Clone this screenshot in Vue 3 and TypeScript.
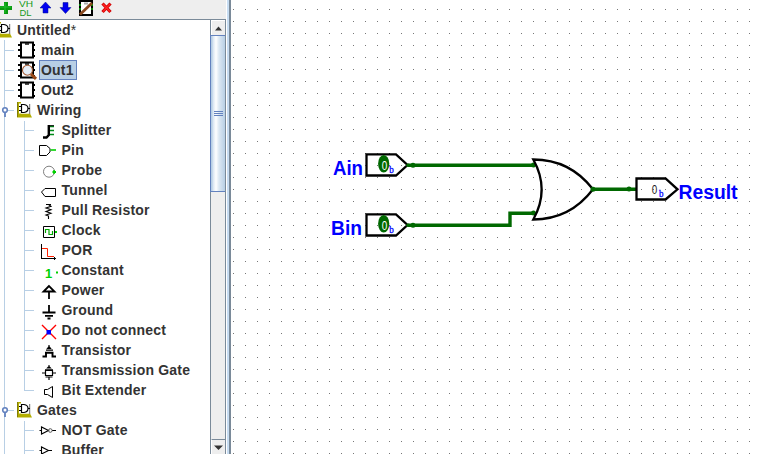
<script setup lang="ts">
interface Shape {
  d: string
  stroke?: string
  fill?: string
  w?: number
}
interface Tool {
  name: string
  icon: string
}
interface Library {
  name: string
  tools: Tool[]
}

const green = '#00d000'

const circuitIcon: Shape[] = [
  { d: 'M21 2.5H33V17.5H21Z', w: 2, fill: '#fff' },
  { d: 'M25 4H29', w: 1.4 },
  { d: 'M18 5H21M18 10H21M18 16H21M33 5H35M33 10H35M33 16H35', w: 2 },
]
const libraryIcon: Shape[] = [
  { d: 'M17 2H21V13.5H30L32 17.5H17Z', fill: '#b3ad00', stroke: 'none' },
  { d: 'M17.5 2V17', stroke: '#817c08' },
  { d: 'M29.5 4V14', stroke: '#888', w: 1.5 },
  { d: 'M19 3.5H29V13.5H19Z', fill: '#fff', stroke: 'none' },
  { d: 'M21.5 4.5H24Q28 5 28 8.5Q28 12 24 12.5H21.5ZM19 6.5H21M19 10.5H21M28 8.5H30', w: 1.2 },
]
const lens: Shape[] = [
  { d: 'M22.5 10.2A5 5 0 1 0 32.5 10.2A5 5 0 1 0 22.5 10.2Z', stroke: '#a35a32', fill: '#e6eef8', w: 1.1 },
  { d: 'M31 14L36 18.8', stroke: '#9a4a1a', w: 3 },
]

const icons: Record<string, Shape[]> = {
  splitter: [
    { d: 'M49 6.5H54M49 10.5H54M49 14.5H54', stroke: '#008a18', w: 1.6 },
    { d: 'M48.8 5V15L46.5 17.5H43', w: 2.4 },
    { d: 'M49 5.7H54', w: 1 },
  ],
  pin: [
    { d: 'M39.5 5.5H46.5L50 8.5V12L46.5 15.5H39.5Z' },
    { d: 'M50.5 10H56', stroke: green, w: 1.6 },
  ],
  probe: [
    { d: 'M43.5 11.7A5.5 5.5 0 1 0 54.5 11.7A5.5 5.5 0 1 0 43.5 11.7Z', stroke: '#808080' },
    { d: 'M52.5 12H56M54 10.2V13.8', stroke: green, w: 2 },
  ],
  tunnel: [{ d: 'M41.5 12L45 8.5H55.5V16.5H45Z' }],
  resistor: [{ d: 'M46 4.5H51M48.5 4.5L51 6.3L46 8L51 9.8L46 11.5L51 13.3L46 15L48.5 16V19', w: 1.1 }],
  clock: [
    { d: 'M43.5 6.5H54.5V17.5H43.5Z' },
    { d: 'M45.5 13V9.5H49V14.5H52.5V11', stroke: '#00a800', w: 1.2 },
    { d: 'M55 12H57', stroke: green, w: 2 },
  ],
  por: [
    { d: 'M41.5 4V19M41 18.5H56M54.5 17V20' },
    { d: 'M42 8.5H47.5V16.5H54', stroke: '#ff2000' },
  ],
  constant: [{ d: 'M56 12.5H58', stroke: green, w: 2 }],
  power: [{ d: 'M49 6L43.5 11.5H54.5ZM49 11.5V19', w: 1.8 }],
  ground: [{ d: 'M49 5V12.5M42.5 12.5H55.5M45 15.8H53M47.5 18.5H50.5', w: 1.8 }],
  cross: [
    { d: 'M42 5L56 19M56 5L42 19', stroke: '#f00', w: 1.4 },
    { d: 'M46.5 10H51V14.5H46.5Z', stroke: 'none', fill: '#00f' },
  ],
  transistor: [
    { d: 'M49 5V7M47.5 8.5L49 6.5L50.5 8.5ZM46 10.2H53', w: 1.2 },
    { d: 'M45 12.7H53.5M46 12.5V16.5H42.5M52.5 12.5V16.5H56', w: 1.9 },
  ],
  transmission: [
    { d: 'M49 5V7M47.5 8L49 6.5L50.5 8Z', w: 1.1 },
    { d: 'M45 9.8H53M45.5 10.5H52.5V15.5H45.5ZM42 13H45M53 13H56M45.5 17H52.5M49 17V20', w: 1.2 },
  ],
  extender: [{ d: 'M44.5 9.5H47.5L52.5 6.5V17.5L47.5 14.5H44.5Z' }],
  not: [
    { d: 'M39.5 10.5H41.5V7L48.5 10.5L41.5 14V10.5M52 10.5H56', w: 1.1 },
    { d: 'M48.5 10.5A1.8 1.8 0 1 0 52.1 10.5A1.8 1.8 0 1 0 48.5 10.5Z', stroke: '#555' },
  ],
  buffer: [{ d: 'M39.5 10.5H41.5V7L48.5 10.5L41.5 14V10.5M48.5 10.5H52', w: 1.1 }],
}

const circuits = ['main', 'Out1', 'Out2']
const selected = 'Out1'
const libraries: Library[] = [
  {
    name: 'Wiring',
    tools: [
      { name: 'Splitter', icon: 'splitter' },
      { name: 'Pin', icon: 'pin' },
      { name: 'Probe', icon: 'probe' },
      { name: 'Tunnel', icon: 'tunnel' },
      { name: 'Pull Resistor', icon: 'resistor' },
      { name: 'Clock', icon: 'clock' },
      { name: 'POR', icon: 'por' },
      { name: 'Constant', icon: 'constant' },
      { name: 'Power', icon: 'power' },
      { name: 'Ground', icon: 'ground' },
      { name: 'Do not connect', icon: 'cross' },
      { name: 'Transistor', icon: 'transistor' },
      { name: 'Transmission Gate', icon: 'transmission' },
      { name: 'Bit Extender', icon: 'extender' },
    ],
  },
  {
    name: 'Gates',
    tools: [
      { name: 'NOT Gate', icon: 'not' },
      { name: 'Buffer', icon: 'buffer' },
    ],
  },
]
const inputs = [
  { name: 'Ain', x: 333, width: 30, y: 0 },
  { name: 'Bin', x: 331, width: 31, y: 60 },
]
</script>

<template>
  <div class="window">
    <aside class="explorer">
      <header class="toolbar">
        <svg width="120" height="19" viewBox="0 0 120 19">
          <path d="M4 2H8V6H12V10H8V14H4V10H0V6H4Z" fill="#0a9a10" />
          <path d="M5 3V13M0 7H11" stroke="#20c030" fill="none" />
          <g class="vhdl">
            <text x="19" y="7" textLength="14" lengthAdjust="spacingAndGlyphs">VH</text>
            <text x="19.500" y="16" textLength="12" lengthAdjust="spacingAndGlyphs">DL</text>
          </g>
          <path d="M45.500 2L51 8H48V13H43V8H40Z" fill="#0000f0" stroke="#001090" stroke-width=".5" />
          <path d="M65.500 13.500L60 7.500H63V2.500H68V7.500H71Z" fill="#0000f0" stroke="#001090" stroke-width=".5" />
          <path d="M80 1H92V15H80Z" fill="#fff" stroke="#000" stroke-width="2" />
          <path d="M79 5H81M79 9H81M91 5H93M91 9H93" stroke="#0a0" stroke-width="1.500" />
          <path d="M84 3.500H88" stroke="#aaa" stroke-width="2" />
          <path d="M80 14.500L92 3" stroke="#8b4a20" stroke-width="2.800" />
          <path d="M102.500 3.500L110.500 12M110.500 3.500L102.500 12" stroke="#d00000" stroke-width="3.200" />
          <path d="M103 4L110 11.500M110 4L103 11.500" stroke="#ff2020" stroke-width="1.500" />
        </svg>
      </header>
      <div class="body">
        <div class="tree">
          <div class="row root">
            <svg width="17" height="20" viewBox="20 0 17 20">
              <path v-for="(s, i) in libraryIcon" :key="i" :d="s.d" :stroke="s.stroke ?? '#000'" :fill="s.fill ?? 'none'" :stroke-width="s.w ?? 1" />
            </svg>
            <span class="label">Untitled<i>*</i></span>
          </div>
          <div v-for="c in circuits" :key="c" class="row circuit">
            <svg width="38" height="20" viewBox="0 0 38 20">
              <path d="M4.500 0V20M4.500 10.500H14" stroke="#b8cfe5" fill="none" />
              <path v-for="(s, i) in c === selected ? [...circuitIcon, ...lens] : circuitIcon" :key="i" :d="s.d" :stroke="s.stroke ?? '#000'" :fill="s.fill ?? 'none'" :stroke-width="s.w ?? 1" />
            </svg>
            <span class="label" :class="{ selected: c === selected }">{{ c }}</span>
          </div>
          <template v-for="lib in libraries" :key="lib.name">
            <div class="row library">
              <svg width="35" height="20" viewBox="0 0 35 20">
                <path d="M4.500 0V20M4.500 10.500H14" stroke="#b8cfe5" fill="none" />
                <circle cx="5" cy="10" r="2.300" fill="#fff" stroke="#6382bf" stroke-width="1.600" />
                <path d="M5 12.500V17" stroke="#6382bf" stroke-width="1.800" />
                <path v-for="(s, i) in libraryIcon" :key="i" :d="s.d" :stroke="s.stroke ?? '#000'" :fill="s.fill ?? 'none'" :stroke-width="s.w ?? 1" />
              </svg>
              <span class="label">{{ lib.name }}</span>
            </div>
            <div v-for="(t, n) in lib.tools" :key="t.name" class="row tool">
              <svg width="60" height="20" viewBox="0 0 60 20">
                <path d="M4.500 0V20M24.500 10.500H34" stroke="#b8cfe5" fill="none" />
                <path :d="t.icon === 'extender' ? 'M24.500 0V11' : n === 0 ? 'M24.500 1V20' : 'M24.500 0V20'" stroke="#b8cfe5" />
                <path v-for="(s, i) in icons[t.icon]" :key="i" :d="s.d" :stroke="s.stroke ?? '#000'" :fill="s.fill ?? 'none'" :stroke-width="s.w ?? 1" />
                <text v-if="t.icon === 'constant'" class="one" x="45" y="18">1</text>
              </svg>
              <span class="label">{{ t.name }}</span>
            </div>
          </template>
        </div>
        <div class="scrollbar">
          <div class="arrow up"><svg width="9" height="5" viewBox="0 0 9 5"><path d="M1 4.500L4.500 .5L8 4.500Z" fill="#333" /></svg></div>
          <div class="thumb"><i></i><i></i><i></i></div>
          <div class="track"></div>
          <div class="arrow down"><svg width="9" height="5" viewBox="0 0 9 5"><path d="M0 .5H9L4.500 5Z" fill="#333" /></svg></div>
        </div>
      </div>
    </aside>
    <div class="divider"></div>
    <svg class="canvas" width="530" height="454" viewBox="231 0 530 454">
      <defs>
        <pattern id="grid" x="233" y="9" width="12" height="12" patternUnits="userSpaceOnUse">
          <rect width="1" height="1" fill="#777" />
        </pattern>
      </defs>
      <rect x="231" width="519" height="454" fill="url(#grid)" />
      <g class="wire">
        <path d="M408 165.300H535M408 225.300H510V213.300H535M593 189.300H636" />
        <circle v-for="p in [[413, 165.3], [413, 225.3], [533.5, 165], [533.5, 213], [629, 189]]" :key="p.join()" :cx="p[0]" :cy="p[1]" r="2.500" />
      </g>
      <path class="outline" d="M533.300 159.500Q570 159.500 593 189.300Q570 219.500 533.300 219.500Q550 189.500 533.300 159.500Z" />
      <circle cx="593" cy="189.300" r="2.500" fill="#006800" />
      <g v-for="p in inputs" :key="p.name" :transform="`translate(0 ${p.y})`">
        <path class="outline" d="M366.500 154.400H396L407.500 165L396 175.500H366.500Z" />
        <circle cx="408" cy="165.300" r="1.800" fill="#006800" />
        <ellipse cx="383.700" cy="163.800" rx="5.600" ry="8.800" fill="#006800" />
        <text class="digit" x="381.700" y="169.500" textLength="5.500" lengthAdjust="spacingAndGlyphs" fill="#fff">0</text>
        <text class="radix" x="389.300" y="172.500" textLength="4.500" lengthAdjust="spacingAndGlyphs">b</text>
        <text class="name" :x="p.x" y="175" :textLength="p.width" lengthAdjust="spacingAndGlyphs">{{ p.name }}</text>
      </g>
      <path class="outline" d="M636.500 178.500H665.500L677.500 189.300L665.500 199.500H636.500Z" />
      <text class="digit" x="651.700" y="194" textLength="5.500" lengthAdjust="spacingAndGlyphs" fill="#222">0</text>
      <text class="radix" x="659" y="196.500" textLength="4.500" lengthAdjust="spacingAndGlyphs">b</text>
      <text class="name" x="678.500" y="199" textLength="59" lengthAdjust="spacingAndGlyphs">Result</text>
    </svg>
  </div>
</template>

<style>
body {
  margin: 0;
  overflow: hidden;
}
</style>

<style scoped>
.window {
  display: flex;
  width: 761px;
  height: 454px;
  overflow: hidden;
  background: #fff;
  font-family: 'Liberation Sans', Arial, sans-serif;
}
.explorer {
  display: flex;
  flex-direction: column;
  width: 226px;
  flex: none;
}
.toolbar {
  height: 19px;
  flex: none;
  background: #eee;
  border-bottom: 1px solid #7a8a99;
}
svg {
  display: block;
  flex: none;
}
.vhdl text {
  font-size: 8.5px;
  fill: #159a20;
}
.body {
  display: flex;
  flex: 1;
  min-height: 0;
}
.tree {
  flex: 1;
  min-width: 0;
  overflow: hidden;
}
.row {
  display: flex;
  height: 20px;
  align-items: center;
}
.label {
  height: 18px;
  padding: 0 1px;
  border: 1px solid transparent;
  box-sizing: border-box;
  font-size: 14px;
  font-weight: 700;
  line-height: 17px;
  letter-spacing: 0.2px;
  color: #333;
  white-space: nowrap;
}
.tool .label {
  margin-left: -0.5px;
}
.label i {
  font-style: normal;
  font-weight: 400;
}
.root .label {
  margin-left: -2px;
}
.circuit .label {
  margin-left: 1px;
}
.circuit .selected {
  height: 20px;
  padding-right: 2px;
  line-height: 19px;
  background: #b8cfe5;
  border-color: #6382bf;
}
.one {
  font: 700 13px 'Liberation Sans', sans-serif;
  fill: #00d000;
}
.scrollbar {
  display: flex;
  flex-direction: column;
  width: 16px;
  flex: none;
  box-sizing: border-box;
  border-left: 1px solid #7a8a99;
  border-right: 1px solid #7a8a99;
  background: #eee;
}
.arrow {
  display: flex;
  align-items: center;
  justify-content: center;
  height: 15px;
  flex: none;
  box-sizing: border-box;
  border-top: 1px solid #fff;
  border-left: 1px solid #fff;
}
.down {
  border-top: 1px solid #7a8a99;
}
.thumb {
  display: flex;
  flex-direction: column;
  align-items: center;
  justify-content: center;
  gap: 1px;
  height: 157px;
  flex: none;
  box-sizing: border-box;
  margin-left: -1px;
  border: 1px solid #6382bf;
  border-right: 0;
  background: linear-gradient(90deg, #b8cfe5 0 1px, #d8e5f2 2px, #fff 5px, #dce8f3 8px, #b8cfe5);
}
.thumb i {
  width: 9px;
  height: 1px;
  background: #6382bf;
}
.track {
  flex: 1;
}
.divider {
  width: 4px;
  margin-left: 1px;
  flex: none;
  background: linear-gradient(90deg, #c8ddf2 50%, #7a8a99 50%);
}
.canvas {
  background: #fff;
}
.wire path {
  fill: none;
  stroke: #006800;
  stroke-width: 3.4;
}
.wire circle {
  fill: #006800;
}
.outline {
  fill: none;
  stroke: #000;
  stroke-width: 2.3;
}
.name {
  font-size: 19.5px;
  font-weight: 700;
  fill: #00f;
}
.digit {
  font-size: 13.5px;
}
.radix {
  font: 10px 'Liberation Serif', serif;
  fill: #00f;
  stroke: #00f;
  stroke-width: 0.3;
}
</style>
